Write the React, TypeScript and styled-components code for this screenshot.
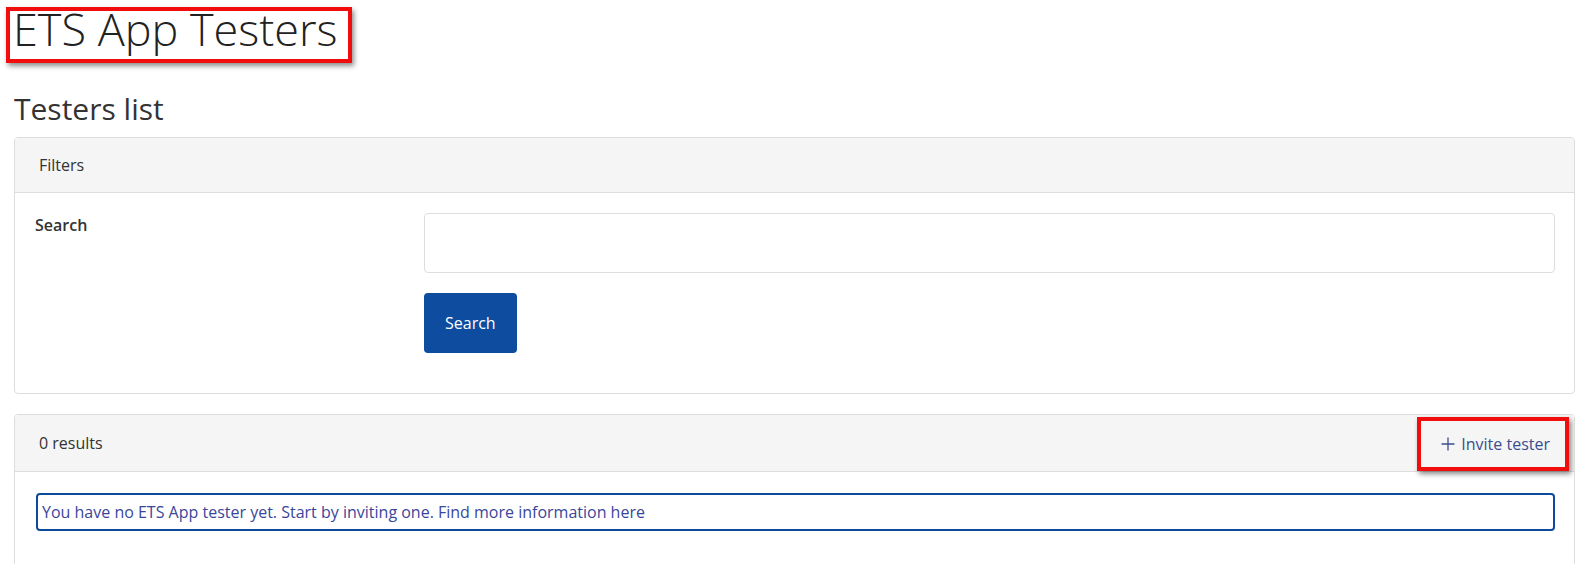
import React from "react";
import styled, { createGlobalStyle } from "styled-components";

const GlobalStyle = createGlobalStyle`
  html, body {
    margin: 0;
    padding: 0;
    background: #ffffff;
  }
  body {
    font-family: "Open Sans", "Noto Sans", Arial, sans-serif;
    font-size: 16px;
    color: #333333;
  }
  * { box-sizing: border-box; }
`;

const Page = styled.div`
  display: flex;
  flex-direction: column;
  align-items: stretch;
  padding: 7px 7px 0 14px;
`;

const Highlight = styled.div`
  border: 4px solid #f20d0d;
  box-shadow: 2px 3px 5px rgba(0, 0, 0, 0.45);
`;

const TitleBox = styled(Highlight)`
  align-self: flex-start;
  margin-left: -8px;
  padding: 0 10px 13px 3px;
`;

const Title = styled.h1`
  margin: 0;
  font-family: "Open Sans", sans-serif;
  font-weight: 300;
  font-size: 45px;
  line-height: 35px;
  color: #222222;
  white-space: nowrap;
`;

const SubTitle = styled.h2`
  margin: 29px 0 12px 0;
  font-family: "Open Sans", sans-serif;
  font-weight: 400;
  font-size: 30px;
  line-height: 33px;
  color: #333333;
`;

const Card = styled.section<{ $gap?: number }>`
  border: 1px solid #dddddd;
  border-radius: 4px;
  background: #ffffff;
  margin-bottom: ${(p) => p.$gap ?? 0}px;
  overflow: hidden;
`;

const CardHeader = styled.div<{ $height: number }>`
  display: flex;
  justify-content: space-between;
  align-items: center;
  min-height: ${(p) => p.$height}px;
  padding: 0 5px 0 24px;
  background: #f5f5f5;
  border-bottom: 1px solid #dddddd;
  font-size: 16px;
  line-height: 22px;
  color: #333333;
`;

const CardBody = styled.div<{ $pad: string }>`
  padding: ${(p) => p.$pad};
`;

const FormRow = styled.div`
  display: grid;
  grid-template-columns: 389px 1fr;
  align-items: start;
`;

const Label = styled.label`
  font-weight: 600;
  font-size: 16px;
  line-height: 24px;
  color: #333333;
`;

const FieldColumn = styled.div`
  display: flex;
  flex-direction: column;
  align-items: flex-start;
  gap: 20px;
`;

const TextInput = styled.input`
  width: 100%;
  height: 60px;
  border: 1px solid #dddddd;
  border-radius: 4px;
  padding: 0 12px;
  font-family: inherit;
  font-size: 16px;
  outline: none;
  background: #ffffff;
`;

const PrimaryButton = styled.button`
  height: 60px;
  padding: 0 21px;
  border: none;
  border-radius: 4px;
  background: #0d4c9f;
  color: #ffffff;
  font-family: "Open Sans", sans-serif;
  font-size: 16px;
  line-height: 22px;
  cursor: pointer;
`;

const InviteBox = styled(Highlight)`
  align-self: flex-end;
  height: 54px;
  display: flex;
  align-items: center;
  padding: 0 15px 0 20px;
`;

const InviteLink = styled.a`
  display: flex;
  align-items: center;
  gap: 6px;
  color: #3b4d8f;
  font-size: 16px;
  line-height: 22px;
  text-decoration: none;
  cursor: pointer;
`;

const Alert = styled.div`
  border: 2px solid #0d4a9c;
  border-radius: 4px;
  padding: 0 4px;
  line-height: 34px;
  font-size: 16px;
  color: #3a469a;
`;

const PlusIcon = () => (
  <svg width="14" height="14" viewBox="0 0 14 14" aria-hidden="true">
    <path d="M7 0.5V13.5M0.5 7H13.5" stroke="#3b4d8f" strokeWidth="1.3" fill="none" />
  </svg>
);

export default function App() {
  return (
    <>
      <GlobalStyle />
      <Page>
        <TitleBox>
          <Title>ETS App Testers</Title>
        </TitleBox>
        <SubTitle>Testers list</SubTitle>

        <Card $gap={20}>
          <CardHeader $height={55}>Filters</CardHeader>
          <CardBody $pad="20px 19px 40px 20px">
            <FormRow>
              <Label htmlFor="search">Search</Label>
              <FieldColumn>
                <TextInput id="search" type="text" />
                <PrimaryButton type="button">Search</PrimaryButton>
              </FieldColumn>
            </FormRow>
          </CardBody>
        </Card>

        <Card>
          <CardHeader $height={57}>
            <span>0 results</span>
            <InviteBox>
              <InviteLink>
                <PlusIcon />
                Invite tester
              </InviteLink>
            </InviteBox>
          </CardHeader>
          <CardBody $pad="21px 19px 40px 21px">
            <Alert>
              You have no ETS App tester yet. Start by inviting one. Find more information here
            </Alert>
          </CardBody>
        </Card>
      </Page>
    </>
  );
}
